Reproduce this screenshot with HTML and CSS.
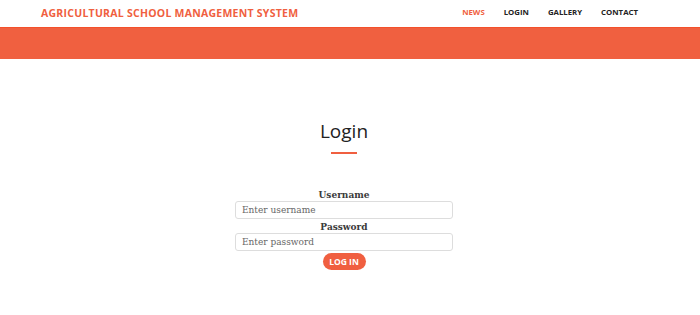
FILE: index.html
```html
<!DOCTYPE html>
<html lang="en">
<head>
  <meta charset="UTF-8">
  <title>Agricultural School Management System</title>
  <link rel="stylesheet" href="styles.css">
</head>
<body>
  <nav class="navbar">
    <a class="brand" href="#">Agricultural School Management System</a>
    <ul class="nav-links">
      <li><a class="active" href="#">News</a></li>
      <li><a href="#">Login</a></li>
      <li><a href="#">Gallery</a></li>
      <li><a href="#">Contact</a></li>
    </ul>
  </nav>
  <header class="band"></header>

  <section class="login">
    <h2 class="section-heading">Login</h2>
    <hr class="divider">
    <form class="login-form">
      <label for="username">Username</label>
      <input id="username" class="field" placeholder="Enter username">
      <label for="password">Password</label>
      <input id="password" class="field" type="password" placeholder="Enter password">
      <button type="button" class="btn-login">Log in</button>
    </form>
  </section>
</body>
</html>
```

FILE: styles.css
```css
* {
  box-sizing: border-box;
  margin: 0;
  padding: 0;
}

body {
  font-family: "DejaVu Serif", serif;
  background: white;
  color: #222;
}

.navbar {
  height: 27px;
  display: flex;
  align-items: center;
  justify-content: space-between;
  padding: 0 62px 1px 41px;
  background: white;
}

.brand {
  font-family: "Open Sans", sans-serif;
  font-weight: 700;
  font-size: 10.5px;
  line-height: 1;
  letter-spacing: 0.25px;
  text-transform: uppercase;
  color: #f05f40;
  text-decoration: none;
}

.nav-links {
  list-style: none;
  display: flex;
  gap: 19px;
  font-size: 8px;
  line-height: 1;
}

.nav-links a {
  font-family: "Open Sans", sans-serif;
  font-weight: 700;
  font-size: 7.8px;
  text-transform: uppercase;
  color: #222;
  text-decoration: none;
}

.nav-links a.active {
  color: #f05f40;
}

.band {
  height: 32px;
  background: #f06040;
  border-top: 1px solid #f4502a;
}

.login {
  display: flex;
  flex-direction: column;
  align-items: center;
  padding-top: 59px;
  margin-right: 12px;
}

.section-heading {
  font-family: "Open Sans", sans-serif;
  font-weight: 400;
  font-size: 19px;
  color: #222;
}

.divider {
  width: 26px;
  border: none;
  border-top: 2px solid #f05f40;
  margin-top: 8px;
}

.login-form {
  display: flex;
  flex-direction: column;
  align-items: center;
  margin-top: 35px;
  width: 218px;
}

.login-form label {
  font-weight: 700;
  font-size: 9px;
  color: #3a3a3a;
  line-height: 12px;
}

.field {
  width: 100%;
  height: 18px;
  border: 1px solid #ddd;
  border-radius: 3px;
  padding: 0 6px;
  font-family: "DejaVu Serif", serif;
  font-size: 9px;
  color: #555;
  outline: none;
  margin-bottom: 2px;
}

.field::placeholder {
  color: #666;
}

.btn-login {
  width: 43px;
  height: 17px;
  border: none;
  border-radius: 10px;
  background: #f05f40;
  color: white;
  font-family: "Open Sans", sans-serif;
  font-weight: 700;
  font-size: 8.5px;
  text-transform: uppercase;
  cursor: pointer;
}
```
